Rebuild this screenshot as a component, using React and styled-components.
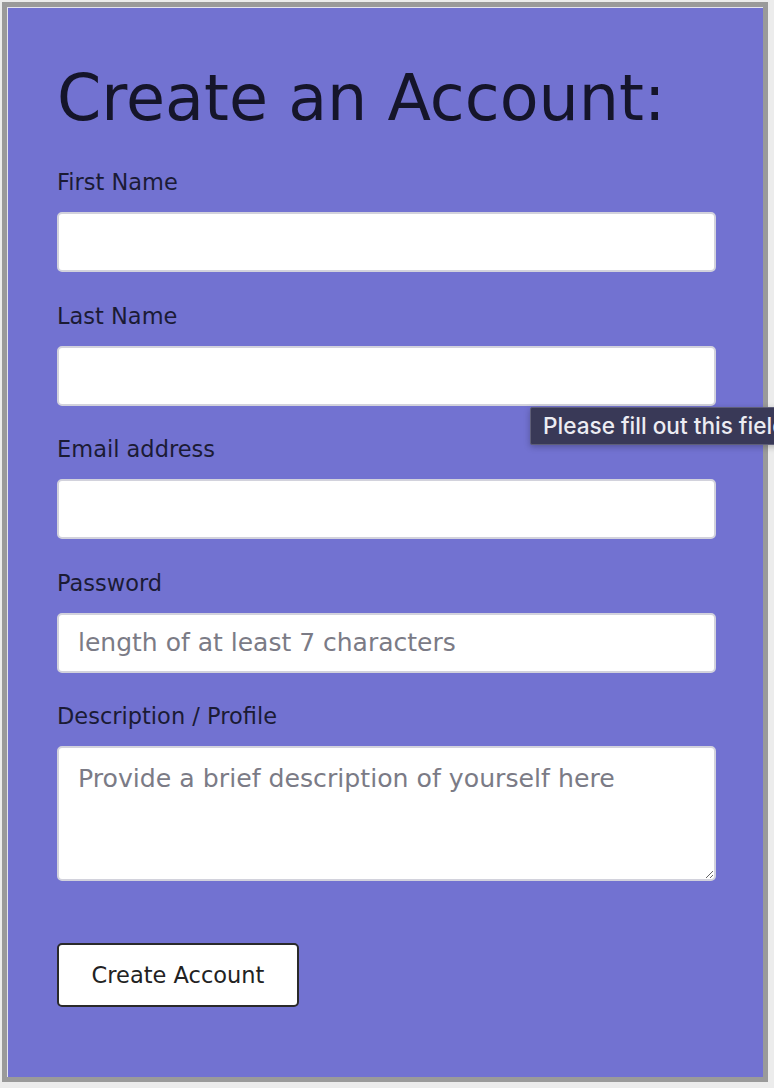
import React from 'react';
import styled, { createGlobalStyle } from 'styled-components';

const Global = createGlobalStyle`
  html, body {
    margin: 0;
    padding: 0;
    background: #ececec;
    overflow: hidden;
  }
  body {
    font-family: "DejaVu Sans", sans-serif;
  }
  *, *::before, *::after {
    box-sizing: border-box;
  }
`;

const Frame = styled.main`
  margin: 2px 6px 6px 2px;
  height: 1080px;
  border: 5px solid #9a9a9a;
  box-shadow: inset 1px 1px 0 #e4e4ee;
  background: #7272d1;
  padding: 55px 47px 0 50px;
`;

const Title = styled.h1`
  margin: 0;
  font-size: 63.5px;
  line-height: 72px;
  font-weight: 400;
  color: #15152a;
`;

const Form = styled.form`
  display: flex;
  flex-direction: column;
  gap: 30.5px;
  margin-top: 35px;
`;

const Field = styled.div`
  position: relative;
  display: flex;
  flex-direction: column;
`;

const Label = styled.label`
  font-size: 22.5px;
  line-height: 26px;
  color: #1b1b35;
  margin-bottom: 17px;
`;

const fieldBase = `
  width: 100%;
  border: 2px solid #d2d2dc;
  border-radius: 5px;
  background: #fff;
  font-family: "DejaVu Sans", sans-serif;
  font-size: 25px;
  color: #222;
  outline: none;
  &::placeholder {
    color: #7b7b86;
  }
`;

const Input = styled.input`
  ${fieldBase}
  height: 60px;
  padding: 0 19px;
`;

const TextArea = styled.textarea`
  ${fieldBase}
  height: 135px;
  padding: 16px 19px;
  display: block;
  font-size: 25.2px;
`;

const Button = styled.button`
  align-self: flex-start;
  margin-top: 31.5px;
  width: 242px;
  height: 64px;
  background: #fff;
  border: 2px solid #2a2a2a;
  border-radius: 5px;
  font-family: "DejaVu Sans", sans-serif;
  font-size: 22.5px;
  color: #222;
  cursor: pointer;
`;

const Bubble = styled.div`
  position: absolute;
  top: calc(100% + 1px);
  left: 473px;
  height: 38px;
  display: flex;
  align-items: center;
  padding: 0 12px;
  background: #393957;
  border: 1px solid #5e5e78;
  border-radius: 2px;
  color: #ececf2;
  font-family: Inter, "Liberation Sans", sans-serif;
  font-weight: 500;
  font-size: 22.6px;
  white-space: nowrap;
  box-shadow: 0 2px 6px rgba(0, 0, 0, 0.25);
  z-index: 2;
`;

export default function App() {
  return (
    <>
      <Global />
      <Frame>
        <Title>Create an Account:</Title>
        <Form onSubmit={(e) => e.preventDefault()}>
          <Field>
            <Label htmlFor="first">First Name</Label>
            <Input id="first" type="text" />
          </Field>
          <Field>
            <Label htmlFor="last">Last Name</Label>
            <Input id="last" type="text" />
            <Bubble>Please fill out this field.</Bubble>
          </Field>
          <Field>
            <Label htmlFor="email">Email address</Label>
            <Input id="email" type="email" />
          </Field>
          <Field>
            <Label htmlFor="password">Password</Label>
            <Input id="password" type="password" placeholder="length of at least 7 characters" />
          </Field>
          <Field>
            <Label htmlFor="desc">Description / Profile</Label>
            <TextArea id="desc" placeholder="Provide a brief description of yourself here" />
          </Field>
          <Button type="submit">Create Account</Button>
        </Form>
      </Frame>
    </>
  );
}
